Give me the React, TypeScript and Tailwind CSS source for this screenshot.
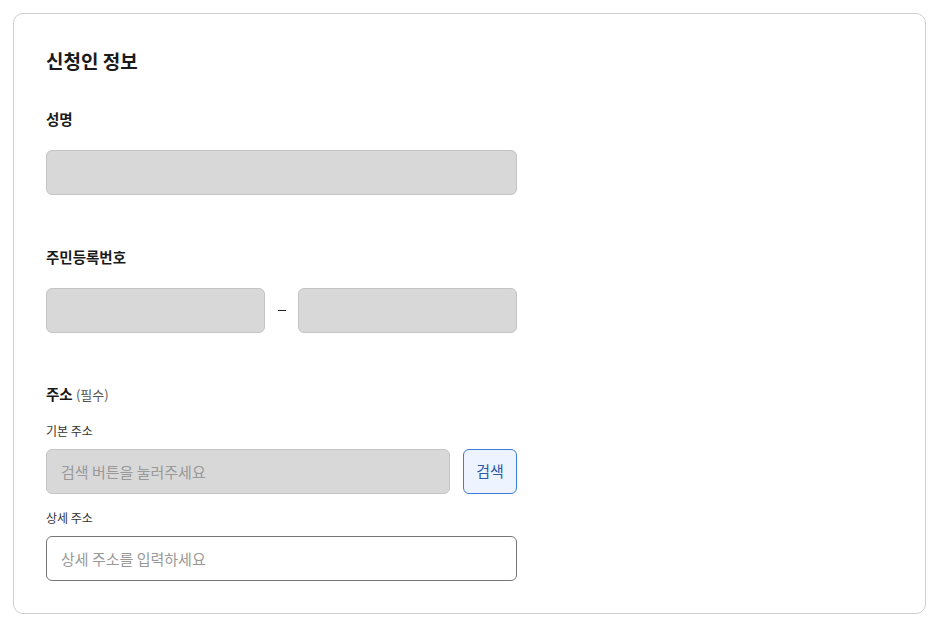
export default function App() {
  return (
    <div className="bg-white py-[13px] pl-[13px] pr-[11px] font-['Noto_Sans_CJK_KR','Noto_Sans',sans-serif] text-[#1a1a1a]">
      <section className="rounded-[10px] border border-[#cfcfcf] bg-white px-8 pt-8 pb-8">
        <h2 className="text-[19px] font-bold leading-[30px]">신청인 정보</h2>

        <div className="mt-8 w-[471px]">
          <label className="block text-[14.5px] font-bold leading-[22px]">성명</label>
          <input
            type="text"
            disabled
            className="mt-5 h-[45px] w-full rounded-md border border-[#c4c4c4] bg-[#d8d8d8]"
          />
        </div>

        <div className="mt-[51px] w-[471px]">
          <label className="block text-[14.5px] font-bold leading-[22px]">주민등록번호</label>
          <div className="mt-5 flex items-center">
            <input
              type="text"
              disabled
              className="h-[45px] w-[219px] rounded-md border border-[#c4c4c4] bg-[#d8d8d8]"
            />
            <span className="flex w-[33px] justify-center">
              <span className="block h-[1.5px] w-2 bg-[#222]" />
            </span>
            <input
              type="text"
              disabled
              className="h-[45px] w-[219px] rounded-md border border-[#c4c4c4] bg-[#d8d8d8]"
            />
          </div>
        </div>

        <div className="mt-[50px] w-[471px]">
          <label className="block text-[14.5px] leading-[22px]">
            <span className="font-bold">주소</span>{' '}
            <span className="text-[13px] text-[#555]">(필수)</span>
          </label>

          <p className="mt-4 text-[12px] leading-[18px] text-[#333]">기본 주소</p>
          <div className="mt-[9px] flex gap-[13px]">
            <input
              type="text"
              disabled
              placeholder="검색 버튼을 눌러주세요"
              className="h-[45px] flex-1 rounded-md border border-[#c4c4c4] bg-[#d8d8d8] px-[14px] text-[15px] placeholder:text-[#999]"
            />
            <button
              type="button"
              className="h-[45px] w-[54px] rounded-md border border-[#3b7ddd] bg-[#eef4ff] text-[15px] text-[#2a5aa8]"
            >
              검색
            </button>
          </div>

          <p className="mt-[15px] text-[12px] leading-[18px] text-[#333]">상세 주소</p>
          <input
            type="text"
            placeholder="상세 주소를 입력하세요"
            className="mt-[9px] h-[45px] w-full rounded-md border border-[#767676] bg-white px-[14px] text-[15px] placeholder:text-[#999]"
          />
        </div>
      </section>
    </div>
  );
}
